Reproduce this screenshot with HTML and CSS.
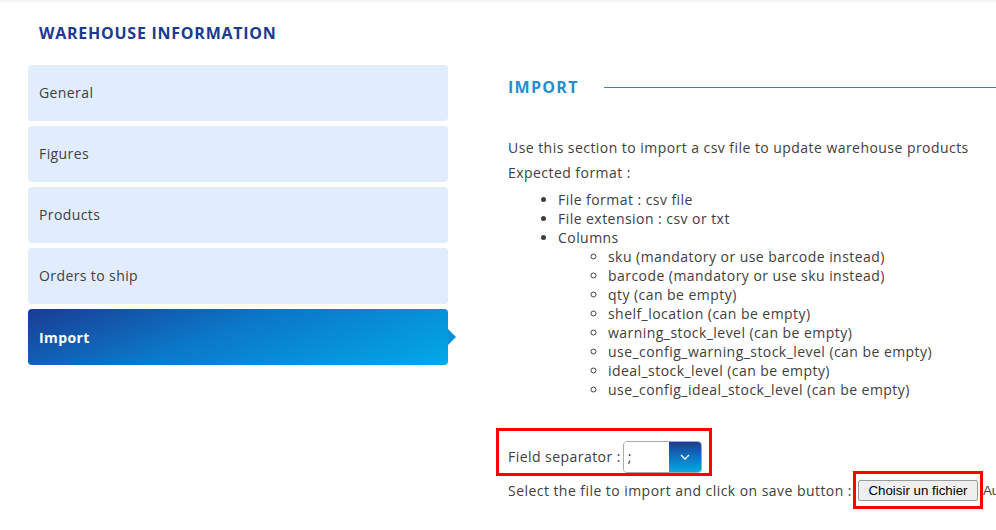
FILE: index.html
```html
<!DOCTYPE html>
<html lang="en">
<head>
<meta charset="utf-8">
<title>Warehouse information</title>
<link rel="stylesheet" href="styles.css">
</head>
<body>
<div class="topshade"></div>
<div class="page">
  <h1 class="page-title">WAREHOUSE INFORMATION</h1>
  <div class="columns">
    <nav class="tabs">
      <a class="tab">General</a>
      <a class="tab">Figures</a>
      <a class="tab">Products</a>
      <a class="tab">Orders to ship</a>
      <a class="tab active">Import</a>
    </nav>
    <main class="content">
      <div class="section-head">
        <h2 class="section-title">IMPORT</h2>
        <span class="section-rule"></span>
      </div>
      <p class="intro">Use this section to import a csv file to update warehouse products</p>
      <p class="expected">Expected format :</p>
      <ul class="fmt">
        <li>File format : csv file</li>
        <li>File extension : csv or txt</li>
        <li>Columns
          <ul class="cols">
            <li>sku (mandatory or use barcode instead)</li>
            <li>barcode (mandatory or use sku instead)</li>
            <li>qty (can be empty)</li>
            <li>shelf_location (can be empty)</li>
            <li>warning_stock_level (can be empty)</li>
            <li>use_config_warning_stock_level (can be empty)</li>
            <li>ideal_stock_level (can be empty)</li>
            <li>use_config_ideal_stock_level (can be empty)</li>
          </ul>
        </li>
      </ul>
      <div class="sep-row">
        <div class="mark sep-box">
          <span class="sep-label">Field separator :</span>
          <div class="select">
            <span class="select-value">;</span>
            <span class="select-btn">
              <svg width="10" height="6" viewBox="0 0 10 6"><path d="M1 1l4 4 4-4" fill="none" stroke="#fff" stroke-width="1.3"/></svg>
            </span>
          </div>
        </div>
      </div>
      <div class="file-row">
        <span class="file-label">Select the file to import and click on save button :</span>
        <span class="mark file-box"><button class="file-btn">Choisir un fichier</button></span>
        <span class="file-name">Aucun fichier choisi</span>
      </div>
    </main>
  </div>
</div>
</body>
</html>
```
FILE: styles.css
```css
html, body {
  margin: 0;
  padding: 0;
  background: #fff;
  overflow: hidden;
}
body {
  font-family: "Open Sans", "DejaVu Sans", sans-serif;
  font-size: 14px;
  letter-spacing: 0.45px;
  color: #404040;
  width: 996px;
  height: 530px;
}
.topshade {
  height: 2px;
  background: linear-gradient(#f0f0f0, #fafafa);
}
.page {
  padding-left: 28px;
}
.page-title {
  margin: 0;
  padding: 21px 0 0 11px;
  height: 42px;
  box-sizing: content-box;
  font-size: 16px;
  line-height: 20px;
  font-weight: 700;
  color: #1c3a8e;
  letter-spacing: 0.75px;
}
.columns {
  display: flex;
  align-items: flex-start;
}
.tabs {
  width: 420px;
  flex: none;
  display: flex;
  flex-direction: column;
  gap: 5px;
}
.tab {
  position: relative;
  display: flex;
  align-items: center;
  height: 56px;
  box-sizing: border-box;
  padding: 0 0 1px 11px;
  background: #e1edfd;
  border-radius: 4px;
  color: #404040;
  font-size: 14px;
  letter-spacing: 0.4px;
}
.tab.active {
  background: linear-gradient(160deg, #1a3c94 0%, #0b78c8 45%, #02a9e8 100%);
  color: #fff;
  font-weight: 700;
  padding-bottom: 0;
}
.tab.active::after {
  content: "";
  position: absolute;
  right: -8px;
  top: 20px;
  border-top: 8.5px solid transparent;
  border-bottom: 8.5px solid transparent;
  border-left: 8px solid #0592d6;
}
.content {
  margin-left: 60px;
  flex: 1;
  min-width: 0;
}
.section-head {
  display: flex;
  align-items: center;
  gap: 25px;
  height: 44px;
}
.section-title {
  margin: 0;
  font-size: 16px;
  font-weight: 700;
  color: #1d8fd2;
  letter-spacing: 1.3px;
}
.section-rule {
  flex: 1;
  height: 1px;
  background: #1b8bd0;
  margin-right: -30px;
}
.intro {
  margin: 29px 0 0;
  line-height: 20px;
  white-space: nowrap;
}
.expected {
  margin: 5px 0 0;
  line-height: 20px;
}
.fmt {
  margin: 7px 0 0;
  padding-left: 50px;
  line-height: 19px;
  list-style: disc;
}
.fmt li {
  line-height: 19px;
}
.cols {
  margin: 0;
  padding-left: 50px;
  list-style: circle;
}
.sep-row {
  margin-top: 29px;
  margin-left: -12px;
}
.mark {
  border: 3px solid #ff0000;
  box-sizing: border-box;
}
.sep-box {
  display: inline-flex;
  align-items: center;
  gap: 2px;
  width: 216px;
  height: 48px;
  padding: 9px 0 0 9px;
}
.select {
  display: flex;
  width: 79px;
  height: 32px;
  box-sizing: border-box;
  border: 1px solid #aaa;
  border-radius: 4px;
  overflow: hidden;
}
.select-value {
  flex: 1;
  padding-left: 4px;
  line-height: 30px;
  background: #fff;
}
.select-btn {
  width: 32px;
  display: flex;
  align-items: center;
  justify-content: center;
  background: linear-gradient(#1b3d96, #03a9e7);
}
.file-row {
  display: flex;
  align-items: center;
  white-space: nowrap;
  margin-top: -5px;
}
.file-box {
  display: inline-flex;
  align-items: center;
  justify-content: center;
  width: 130px;
  height: 38px;
  flex: none;
  margin-left: 1px;
}
.file-btn {
  font-family: "Liberation Sans", Arial, sans-serif;
  font-size: 13.3px;
  letter-spacing: 0;
  color: #000;
  background: #efefef;
  border: 1px solid #9a9a9a;
  border-radius: 2px;
  height: 21px;
  width: 120px;
  padding: 0;
}
.file-name {
  font-family: "Liberation Sans", Arial, sans-serif;
  font-size: 13.3px;
  letter-spacing: 0;
}
```
